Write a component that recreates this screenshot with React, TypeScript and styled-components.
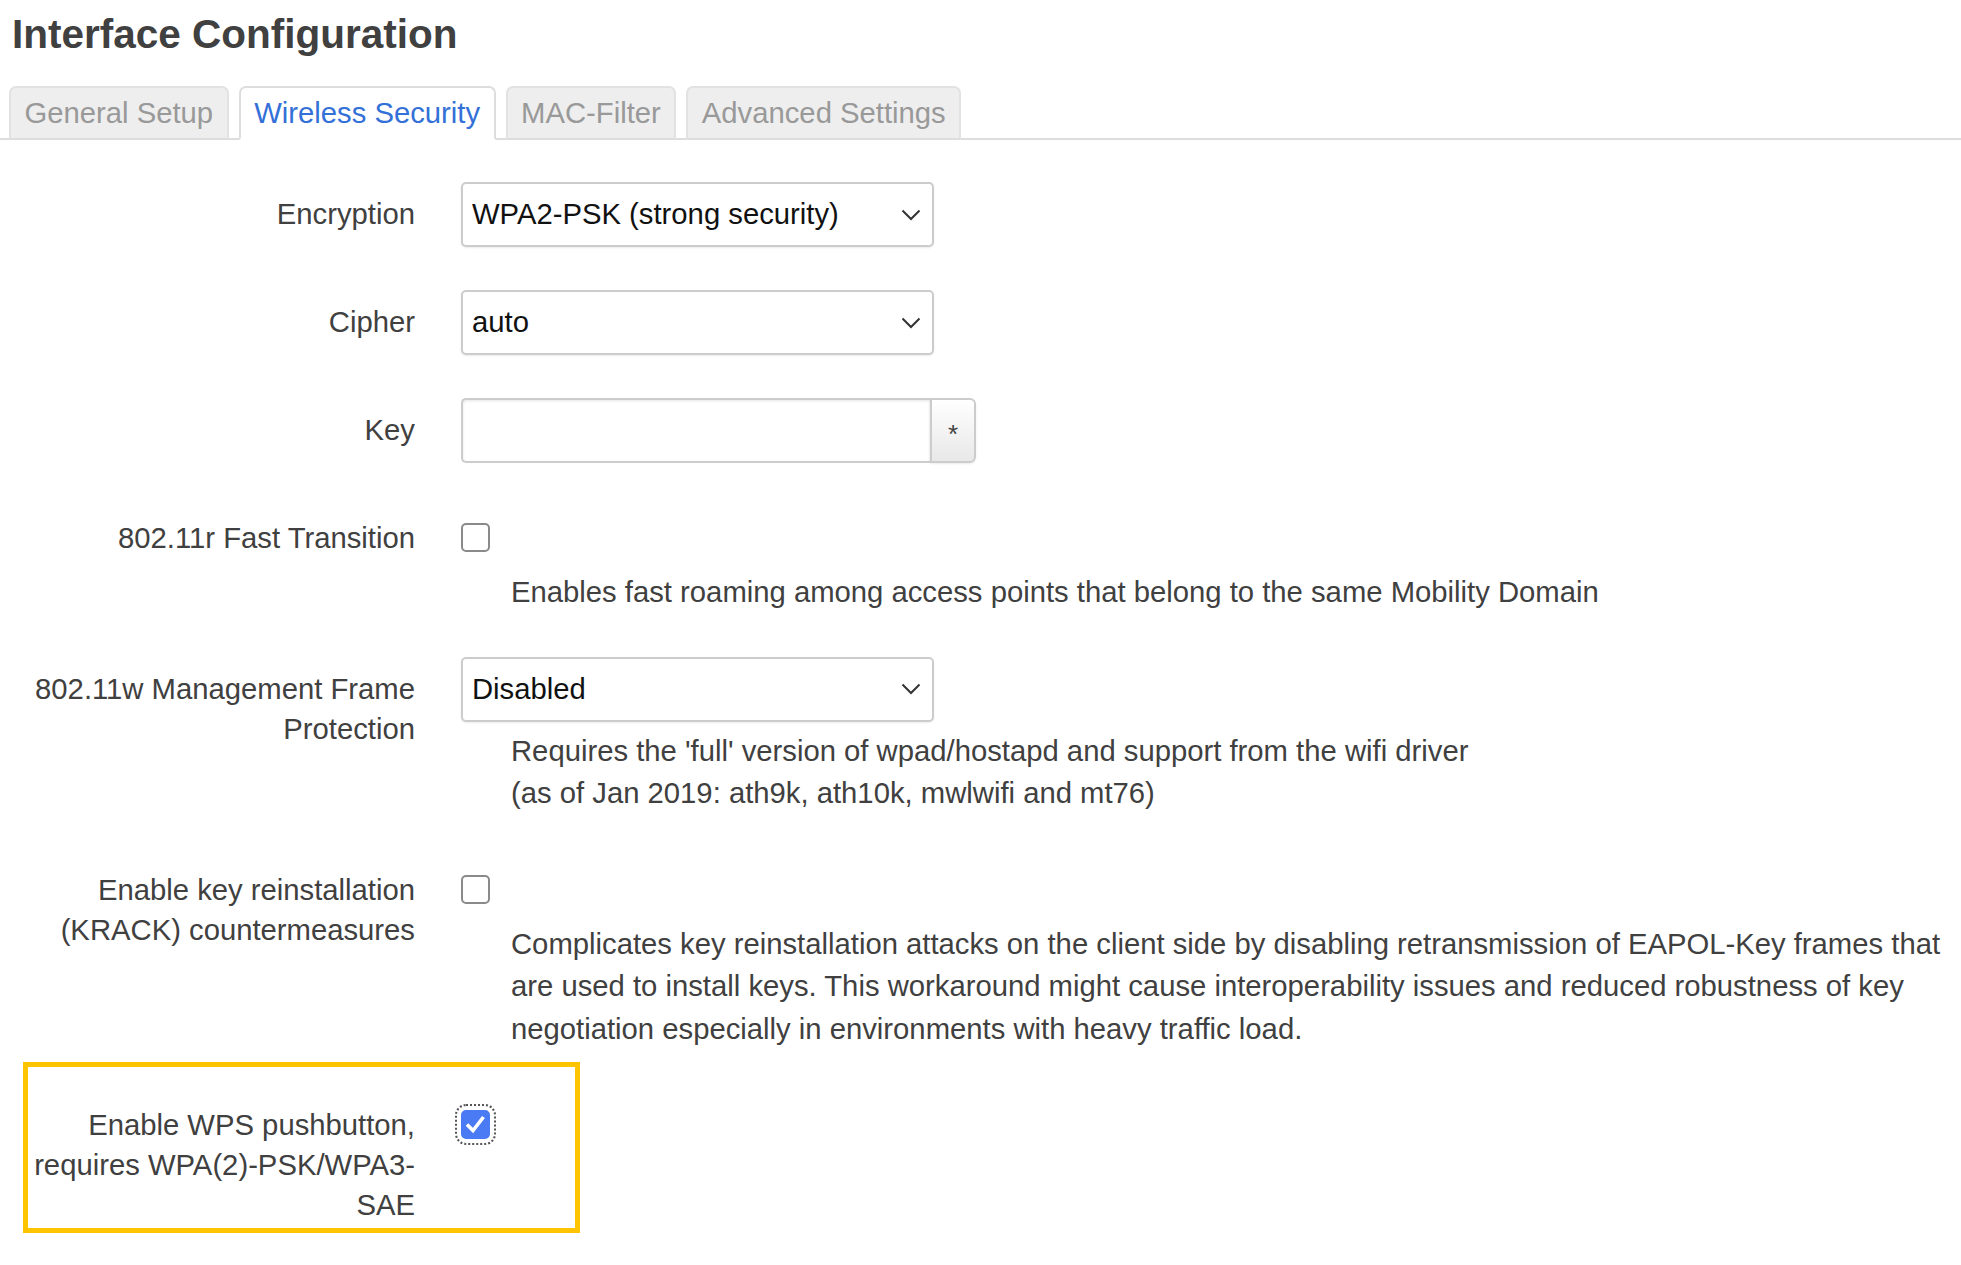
import React from "react";
import styled, { createGlobalStyle } from "styled-components";

const Global = createGlobalStyle`
  html, body { margin: 0; padding: 0; background: #fff; }
  body { font-family: "Liberation Sans", Arial, sans-serif; color: #404040; }
`;

const Page = styled.div`
  width: 1961px;
  min-height: 1265px;
  padding-top: 12px;
  box-sizing: border-box;
`;

const Title = styled.h2`
  margin: 0 0 30px;
  padding-left: 12px;
  font-size: 40.5px;
  line-height: 44px;
  font-weight: bold;
  color: #404040;
`;

const Tabs = styled.ul`
  display: flex;
  gap: 10px;
  margin: 0;
  padding: 0 0 0 9px;
  list-style: none;
  border-bottom: 2px solid #ddd;
`;

const Tab = styled.li<{ $active?: boolean }>`
  margin-bottom: -2px;
  padding: 5px 13.5px 4px;
  font-size: 29.25px;
  line-height: 41.4px;
  border: 2px solid ${(p) => (p.$active ? "#ddd" : "#e2e2e2")};
  border-bottom-color: ${(p) => (p.$active ? "#fff" : "#ddd")};
  border-radius: 7px 7px 0 0;
  background: ${(p) => (p.$active ? "#fff" : "#eee")};
  color: ${(p) => (p.$active ? "#3370d8" : "#999")};
`;

const Form = styled.div`
  padding: 42px 0 0 23px;
`;

const Row = styled.div`
  position: relative;
  display: grid;
  grid-template-columns: 392px 1fr;
  column-gap: 46px;
  margin-bottom: 43px;
`;

const Label = styled.label`
  padding-top: 12px;
  font-size: 29.25px;
  line-height: 40px;
  text-align: right;
  color: #404040;
`;

const Field = styled.div`
  min-width: 0;
`;

const SelectBox = styled.div`
  display: flex;
  align-items: center;
  justify-content: space-between;
  box-sizing: border-box;
  width: 473px;
  height: 65px;
  padding: 0 11px 0 9px;
  border: 2px solid #ccc;
  border-radius: 5px;
  background: #fff;
  box-shadow: 0 1px 2px rgba(0, 0, 0, 0.08);
  font-size: 29.25px;
  color: #111;
`;

const KeyGroup = styled.div`
  display: flex;
  width: 515px;
  height: 65px;
`;

const KeyInput = styled.div`
  flex: 1;
  box-sizing: border-box;
  border: 2px solid #ccc;
  border-right: none;
  border-radius: 5px 0 0 5px;
  background: #fff;
  box-shadow: inset 0 1px 3px rgba(0, 0, 0, 0.1);
`;

const KeyButton = styled.div`
  display: flex;
  justify-content: center;
  align-items: center;
  box-sizing: border-box;
  width: 46px;
  padding-top: 8px;
  border: 2px solid #ccc;
  border-radius: 0 6px 6px 0;
  background: linear-gradient(#fff, #e8e8e8);
  box-shadow: 0 1px 2px rgba(0, 0, 0, 0.08);
  font-size: 26px;
  color: #444;
`;

const CheckWrap = styled.div`
  box-sizing: border-box;
  height: 57px;
  padding-top: 17px;
`;

const Check = styled.span<{ $checked?: boolean; $focused?: boolean }>`
  display: block;
  box-sizing: border-box;
  width: 29px;
  height: 29px;
  border-radius: 5px;
  border: 2px solid ${(p) => (p.$checked ? "#4a7bf5" : "#8a8a8a")};
  background: ${(p) => (p.$checked ? "#4a7bf5" : "#fff")};
  outline: ${(p) => (p.$focused ? "2px dotted #555" : "none")};
  outline-offset: 4px;
  svg {
    display: block;
  }
`;

const Desc = styled.div`
  margin: 8px 0 0 50px;
  font-size: 29.25px;
  line-height: 42.5px;
  color: #404040;
`;

const Highlight = styled.div`
  position: absolute;
  left: 0;
  top: -31px;
  width: 557px;
  height: 171px;
  box-sizing: border-box;
  border: 5px solid #ffc400;
  pointer-events: none;
`;

const Chevron = () => (
  <svg width="20" height="12" viewBox="0 0 20 12">
    <polyline points="1.5,1.5 10,10 18.5,1.5" fill="none" stroke="#333" strokeWidth="2" />
  </svg>
);

const Select = ({ value }: { value: string }) => (
  <SelectBox>
    <span>{value}</span>
    <Chevron />
  </SelectBox>
);

const Checkbox = ({ checked, focused }: { checked?: boolean; focused?: boolean }) => (
  <CheckWrap>
    <Check $checked={checked} $focused={focused}>
      {checked && (
        <svg width="25" height="25" viewBox="0 0 25 25">
          <polyline points="4,12.5 10,18.5 20.5,5" fill="none" stroke="#fff" strokeWidth="3.6" />
        </svg>
      )}
    </Check>
  </CheckWrap>
);

export default function App() {
  return (
    <Page>
      <Global />
      <Title>Interface Configuration</Title>
      <Tabs>
        <Tab>General Setup</Tab>
        <Tab $active>Wireless Security</Tab>
        <Tab>MAC-Filter</Tab>
        <Tab>Advanced Settings</Tab>
      </Tabs>
      <Form>
        <Row>
          <Label>Encryption</Label>
          <Field>
            <Select value="WPA2-PSK (strong security)" />
          </Field>
        </Row>
        <Row>
          <Label>Cipher</Label>
          <Field>
            <Select value="auto" />
          </Field>
        </Row>
        <Row>
          <Label>Key</Label>
          <Field>
            <KeyGroup>
              <KeyInput />
              <KeyButton>*</KeyButton>
            </KeyGroup>
          </Field>
        </Row>
        <Row>
          <Label>802.11r Fast Transition</Label>
          <Field>
            <Checkbox />
            <Desc>Enables fast roaming among access points that belong to the same Mobility Domain</Desc>
          </Field>
        </Row>
        <Row>
          <Label>802.11w Management Frame Protection</Label>
          <Field>
            <Select value="Disabled" />
            <Desc>
              Requires the 'full' version of wpad/hostapd and support from the wifi driver
              <br />
              (as of Jan 2019: ath9k, ath10k, mwlwifi and mt76)
            </Desc>
          </Field>
        </Row>
        <Row>
          <Label>Enable key reinstallation (KRACK) countermeasures</Label>
          <Field>
            <Checkbox />
            <Desc>
              Complicates key reinstallation attacks on the client side by disabling retransmission of
              EAPOL-Key frames that are used to install keys. This workaround might cause
              interoperability issues and reduced robustness of key negotiation especially in
              environments with heavy traffic load.
            </Desc>
          </Field>
        </Row>
        <Row>
          <Highlight />
          <Label>Enable WPS pushbutton, requires WPA(2)-PSK/WPA3-SAE</Label>
          <Field>
            <Checkbox checked focused />
          </Field>
        </Row>
      </Form>
    </Page>
  );
}
